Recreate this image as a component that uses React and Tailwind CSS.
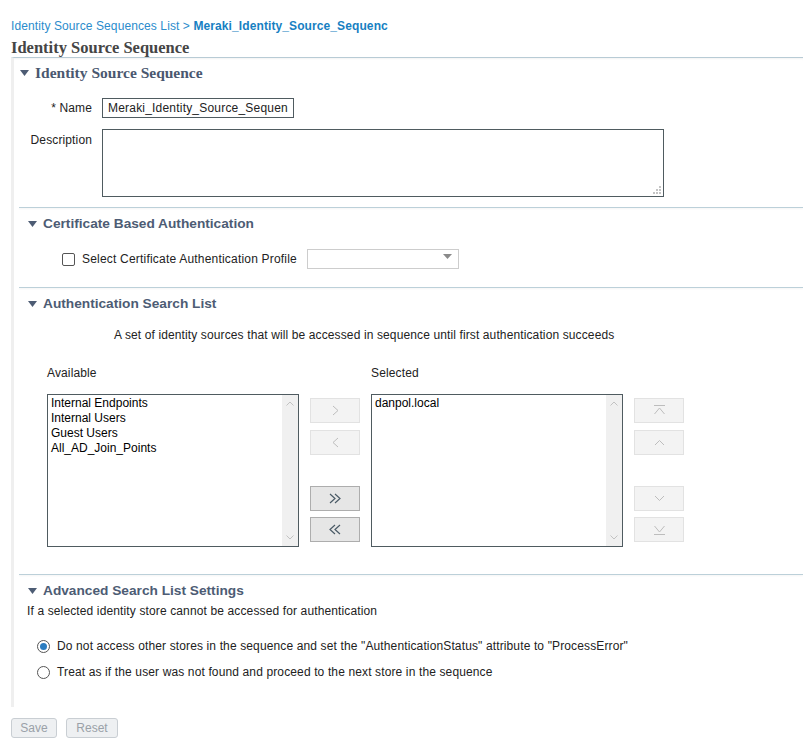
import { useState } from "react";

const sans = "font-['Liberation_Sans',Arial,sans-serif]";
const serif = "font-['Liberation_Serif','Times_New_Roman',serif]";

function Triangle() {
  return (
    <svg width="9" height="6" viewBox="0 0 9 6" className="shrink-0">
      <path d="M0 0 H9 L4.5 6 Z" fill="#4d5c74" />
    </svg>
  );
}

function SectionHeader({ title, first }) {
  return (
    <div className={`flex h-4 items-center ${first ? "pl-[6px] gap-[6px]" : "pl-[14px] gap-[6px]"}`}>
      <Triangle />
      {first ? (
        <span className={`${serif} text-[15.5px] font-bold leading-4 text-[#4a5870]`}>{title}</span>
      ) : (
        <span className={`${sans} text-[13.7px] font-bold leading-4 text-[#4d5c74]`}>{title}</span>
      )}
    </div>
  );
}

function Separator() {
  return <div className="ml-[5px] h-px bg-[#bcd0d9] shadow-[0_1px_2px_rgba(0,0,0,0.06)]" />;
}

function ListBox({ items }) {
  return (
    <div className="flex h-[153px] w-[252px] border border-[#4f5b60] bg-white">
      <div className="flex-1 pl-[3px] pt-px text-[12px] leading-[15px] text-black">
        {items.map((item) => (
          <div key={item}>{item}</div>
        ))}
      </div>
      <div className="flex w-[16px] flex-col items-center justify-between bg-[#f0f0f0] py-[6px]">
        <svg width="8" height="5" viewBox="0 0 8 5">
          <path d="M0.5 4.5 L4 1 L7.5 4.5" fill="none" stroke="#c2c2c2" strokeWidth="1" />
        </svg>
        <svg width="8" height="5" viewBox="0 0 8 5">
          <path d="M0.5 0.5 L4 4 L7.5 0.5" fill="none" stroke="#c2c2c2" strokeWidth="1" />
        </svg>
      </div>
    </div>
  );
}

function MoveButton({ children, enabled, className = "" }) {
  return (
    <button
      className={`flex h-[25px] w-[50px] items-center justify-center border ${
        enabled ? "border-[#adadad] bg-[#e6e6e6] text-[#4a5a66]" : "border-[#e2e2e2] bg-[#f3f3f3] text-[#bdbdbd]"
      } ${className}`}
    >
      {children}
    </button>
  );
}

function Chevron({ dir }) {
  const d = {
    right: "M3 1 L8 5.5 L3 10",
    left: "M8 1 L3 5.5 L8 10",
    up: "M1 8 L5.5 3.5 L10 8",
    down: "M1 3 L5.5 7.5 L10 3",
  }[dir];
  return (
    <svg width="11" height="11" viewBox="0 0 11 11">
      <path d={d} fill="none" stroke="currentColor" strokeWidth="1" />
    </svg>
  );
}

function Double({ dir }) {
  const d =
    dir === "right"
      ? "M1 1 L6 5.5 L1 10 M6 1 L11 5.5 L6 10"
      : "M11 1 L6 5.5 L11 10 M6 1 L1 5.5 L6 10";
  return (
    <svg width="12" height="11" viewBox="0 0 12 11">
      <path d={d} fill="none" stroke="currentColor" strokeWidth="1.2" />
    </svg>
  );
}

function Edge({ dir }) {
  const d = dir === "top" ? "M1 1.5 H12 M1.5 10 L6.5 4 L11.5 10" : "M1 11.5 H12 M1.5 3 L6.5 9 L11.5 3";
  return (
    <svg width="13" height="13" viewBox="0 0 13 13">
      <path d={d} fill="none" stroke="currentColor" strokeWidth="1" />
    </svg>
  );
}

function Radio({ checked, label }) {
  return (
    <label className="flex h-4 items-center">
      <span className="ml-[23px] flex h-[13px] w-[13px] items-center justify-center rounded-full border border-[#555] bg-white">
        {checked && <span className="h-[7px] w-[7px] rounded-full bg-[#2b7cc0]" />}
      </span>
      <span className="ml-[7px] tracking-[0.13px]">{label}</span>
    </label>
  );
}

export default function App() {
  const [mode, setMode] = useState("stop");

  return (
    <div className={`${sans} min-h-[750px] w-[803px] bg-white pt-[18px] text-[12px] text-[#222]`}>
      <div className="pl-[11px] leading-4 tracking-[0.1px] text-[#2b8ccc]">
        Identity Source Sequences List &gt;{" "}
        <span className="font-bold text-[#177fc2]">Meraki_Identity_Source_Sequenc</span>
      </div>
      <h1 className={`${serif} mt-[5px] pl-[11px] text-[16.5px] font-bold leading-[18px] text-[#454545]`}>
        Identity Source Sequence
      </h1>

      <div className="ml-[11px] border-l-[3px] border-t border-l-[#efefef] border-t-[#b8cbd5] pb-[27px] shadow-[inset_0_2px_2px_-1px_rgba(0,0,0,0.05)]">
        {/* Identity Source Sequence */}
        <div className="pt-[7px]">
          <SectionHeader title="Identity Source Sequence" first />
          <div className="mt-[17px] flex items-center">
            <div className="w-[78px] text-right tracking-[0.13px]">* Name</div>
            <input
              readOnly
              value="Meraki_Identity_Source_Sequence"
              className="ml-[10px] h-[20px] w-[192px] border border-[#4f5b60] px-[5px] text-[12px] tracking-[0.2px] text-[#222] outline-none"
            />
          </div>
          <div className="mt-[11px] flex items-start">
            <div className="w-[78px] pt-[3px] text-right leading-4 tracking-[0.13px]">Description</div>
            <div className="relative ml-[10px] h-[68px] w-[562px] border border-[#4f5b60]">
              <textarea className="h-full w-full resize-none outline-none" />
              <svg width="8" height="8" viewBox="0 0 8 8" className="absolute bottom-[2px] right-[2px]">
                <rect x="6" y="0" width="2" height="2" fill="#c4c4c4" />
                <rect x="3" y="3" width="2" height="2" fill="#c4c4c4" />
                <rect x="6" y="3" width="2" height="2" fill="#c4c4c4" />
                <rect x="0" y="6" width="2" height="2" fill="#c4c4c4" />
                <rect x="3" y="6" width="2" height="2" fill="#c4c4c4" />
                <rect x="6" y="6" width="2" height="2" fill="#c4c4c4" />
              </svg>
            </div>
          </div>
        </div>

        <div className="mt-[10px]">
          <Separator />
        </div>

        {/* Certificate Based Authentication */}
        <div className="pt-[8px]">
          <SectionHeader title="Certificate Based Authentication" />
          <div className="mt-[17px] flex items-center">
            <span className="ml-[48px] h-[13px] w-[13px] rounded-[2px] border border-[#555] bg-white" />
            <span className="ml-[7px] tracking-[0.2px]">Select Certificate Authentication Profile</span>
            <div className="ml-[10px] flex h-[20px] w-[152px] items-start justify-end border border-[#cdcdcd] bg-white pr-[6px] pt-[4px]">
              <svg width="9" height="5" viewBox="0 0 9 5">
                <path d="M0 0 H9 L4.5 5 Z" fill="#8a8a8a" />
              </svg>
            </div>
          </div>
        </div>

        <div className="mt-[18px]">
          <Separator />
        </div>

        {/* Authentication Search List */}
        <div className="pt-[8px]">
          <SectionHeader title="Authentication Search List" />
          <div className="mt-[15px] pl-[100px] leading-4 tracking-[0.12px]">
            A set of identity sources that will be accessed in sequence until first authentication succeeds
          </div>
          <div className="mt-[22px] flex pl-[33px] leading-4 tracking-[0.13px]">
            <div className="w-[324px]">Available</div>
            <div>Selected</div>
          </div>
          <div className="mt-[13px] flex items-start pl-[33px]">
            <ListBox items={["Internal Endpoints", "Internal Users", "Guest Users", "All_AD_Join_Points"]} />
            <div className="ml-[11px] flex flex-col pt-[4px]">
              <MoveButton>
                <Chevron dir="right" />
              </MoveButton>
              <MoveButton className="mt-[7px]">
                <Chevron dir="left" />
              </MoveButton>
              <MoveButton enabled className="mt-[31px]">
                <Double dir="right" />
              </MoveButton>
              <MoveButton enabled className="mt-[6px]">
                <Double dir="left" />
              </MoveButton>
            </div>
            <div className="ml-[11px]">
              <ListBox items={["danpol.local"]} />
            </div>
            <div className="ml-[11px] flex flex-col pt-[4px]">
              <MoveButton>
                <Edge dir="top" />
              </MoveButton>
              <MoveButton className="mt-[7px]">
                <Chevron dir="up" />
              </MoveButton>
              <MoveButton className="mt-[31px]">
                <Chevron dir="down" />
              </MoveButton>
              <MoveButton className="mt-[6px]">
                <Edge dir="bottom" />
              </MoveButton>
            </div>
          </div>
        </div>

        <div className="mt-[27px]">
          <Separator />
        </div>

        {/* Advanced Search List Settings */}
        <div className="pt-[8px]">
          <SectionHeader title="Advanced Search List Settings" />
          <div className="mt-[4px] pl-[13px] leading-4 tracking-[0.13px]">
            If a selected identity store cannot be accessed for authentication
          </div>
          <div className="mt-[19px]" onClick={() => setMode("stop")}>
            <Radio
              checked={mode === "stop"}
              label={'Do not access other stores in the sequence and set the "AuthenticationStatus" attribute to "ProcessError"'}
            />
          </div>
          <div className="mt-[10px]" onClick={() => setMode("next")}>
            <Radio checked={mode === "next"} label="Treat as if the user was not found and proceed to the next store in the sequence" />
          </div>
        </div>
      </div>

      <div className="mt-[11px] flex gap-[9px] pl-[11px]">
        <button className="h-[20px] w-[46px] rounded-[3px] border border-[#c9ced3] bg-[#eef0f2] text-[12px] text-[#9aa1a8]">
          Save
        </button>
        <button className="h-[20px] w-[52px] rounded-[3px] border border-[#c9ced3] bg-[#eef0f2] text-[12px] text-[#9aa1a8]">
          Reset
        </button>
      </div>
    </div>
  );
}
